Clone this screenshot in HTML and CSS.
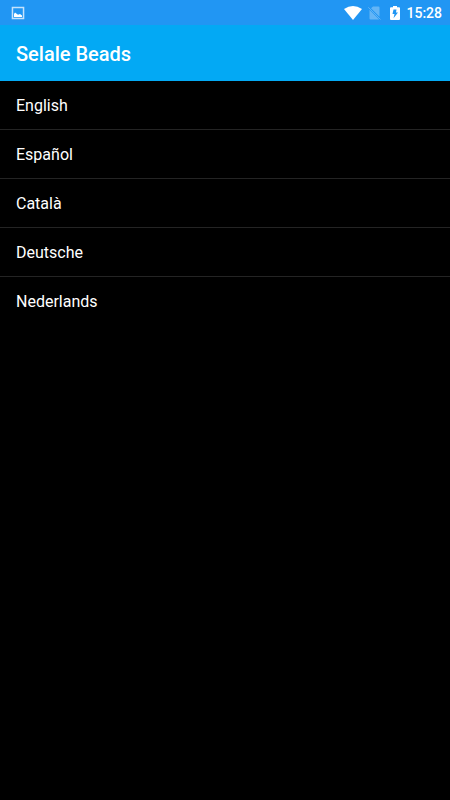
FILE: index.html
```html
<!DOCTYPE html>
<html lang="en">
<head>
<meta charset="utf-8">
<title>Selale Beads</title>
<link rel="stylesheet" href="styles.css">
</head>
<body>
<div class="status">
  <svg class="picture" width="14" height="14" viewBox="0 0 14 14"><path fill="#c4e2fc" fill-rule="evenodd" d="M.7.7h12.600v12.600H.7zM2.200 2.200v9.600h9.600V2.200z"/><path fill="#fff" d="M3 11V8l1-1.500L6 8l1 .7L9 8l2 1.500V11z"/></svg>
  <div class="indicators">
    <svg class="wifi" width="18" height="14" viewBox="0 0 18 14"><path fill="#fff" d="M0 3Q9-3 18 3L9 14z"/></svg>
    <svg class="sim" width="13" height="14" viewBox="0 0 13 14"><path fill="#64b5f6" d="M5 .5h5.500q1 0 1 1v9.300L3 2.300zM1.500 3.800l9.700 9.700H2.500q-1 0-1-1z"/><path stroke="#64b5f6" stroke-width=".9" d="M.3 1.300l12.200 12.200"/></svg>
    <svg class="battery" width="10" height="14" viewBox="0 0 10 14"><path fill="#fff" fill-rule="evenodd" d="M3 0h4v1.300h2q1 0 1 1V13q0 1-1 1H1q-1 0-1-1V2.300q0-1 1-1h2zM6.500 3.500h-3L2.500 8h2L3.500 12.300 8 6.500H6z"/></svg>
    <span class="clock">15:28</span>
  </div>
</div>
<header class="toolbar"><h1>Selale Beads</h1></header>
<ul class="languages"><li>English</li><li>Español</li><li>Català</li><li>Deutsche</li><li>Nederlands</li></ul>
</body>
</html>
```
FILE: styles.css
```css
body { margin: 0; min-height: 100vh; background: #000; color: #fff; font-family: Roboto, sans-serif; }
.status { display: flex; align-items: center; justify-content: space-between; height: 25px; padding: 0 8px 0 11px; box-sizing: border-box; background: #2196f3; }
.indicators { display: flex; align-items: center; }
.sim { margin-left: 6px; }
.battery { margin-left: 9px; }
.clock { margin-left: 6px; font-size: 14px; font-weight: 500; line-height: 26px; }
.toolbar { display: flex; align-items: center; height: 56px; padding-left: 16px; background: #03a9f4; }
h1 { margin: 0; font-size: 20px; font-weight: 500; line-height: 24px; padding-top: 2px; }
.languages { margin: 0; padding: 0; list-style: none; }
.languages li { height: 48px; padding-left: 16px; font-size: 16px; line-height: 50px; border-bottom: 1px solid #242424; }
.languages li:last-child { border-bottom: 0; }
```
